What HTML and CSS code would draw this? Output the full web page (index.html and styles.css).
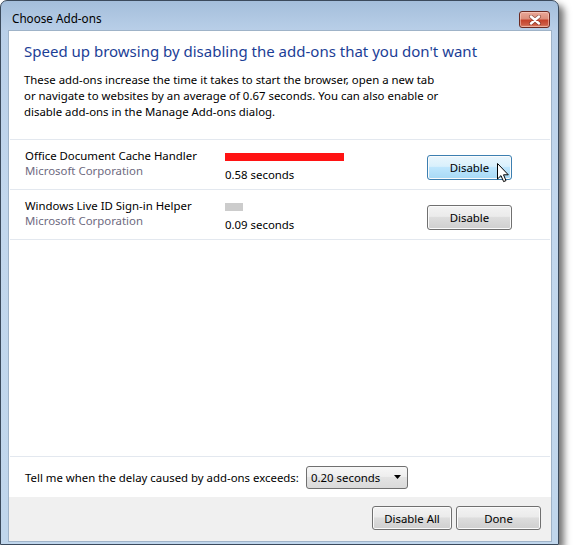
FILE: index.html
```html
<!DOCTYPE html>
<html>
<head>
<meta charset="utf-8">
<link rel="stylesheet" href="styles.css">
</head>
<body>
<div class="window">
  <div class="titlebar">
    <span class="title">Choose Add-ons</span>
    <div class="close">
      <svg width="14" height="10" viewBox="0 0 14 10">
        <path d="M3 1.5 L11 8.5 M11 1.5 L3 8.5" stroke="#5a1f16" stroke-width="4" stroke-linecap="round" fill="none" opacity="0.55"/>
        <path d="M3 1.5 L11 8.5 M11 1.5 L3 8.5" stroke="#ffffff" stroke-width="2.4" stroke-linecap="round" fill="none"/>
      </svg>
    </div>
  </div>
  <div class="client">
    <div class="main">
      <h1 class="heading">Speed up browsing by disabling the add-ons that you don't want</h1>
      <p class="desc">These add-ons increase the time it takes to start the browser, open a new tab<br>or navigate to websites by an average of 0.67 seconds. You can also enable or<br>disable add-ons in the Manage Add-ons dialog.</p>
      <div class="list">
        <div class="row">
          <div class="info">
            <div class="name">Office Document Cache Handler</div>
            <div class="company">Microsoft Corporation</div>
          </div>
          <div class="timing">
            <div class="bar bar-red" style="width:119px"></div>
            <div class="secs">0.58 seconds</div>
          </div>
          <div class="btn-wrap">
            <div class="btn btn-hover btn-row">Disable</div>
            <svg class="cursor" width="13" height="20" viewBox="0 0 13 20">
              <path d="M0.5 0.5 L0.5 16 L4 12.6 L6.6 18.6 L9 17.6 L6.5 11.8 L11.3 11.8 Z" fill="#ffffff" stroke="#000000" stroke-width="1" stroke-linejoin="miter"/>
            </svg>
          </div>
        </div>
        <div class="row row-last">
          <div class="info">
            <div class="name">Windows Live ID Sign-in Helper</div>
            <div class="company">Microsoft Corporation</div>
          </div>
          <div class="timing">
            <div class="bar bar-gray" style="width:18px"></div>
            <div class="secs">0.09 seconds</div>
          </div>
          <div class="btn-wrap">
            <div class="btn btn-row">Disable</div>
          </div>
        </div>
      </div>
    </div>
    <div class="threshold">
      <span class="threshold-label">Tell me when the delay caused by add-ons exceeds:</span>
      <div class="combo">
        <span>0.20 seconds</span>
        <svg width="7" height="4" viewBox="0 0 7 4"><path d="M0 0 H7 L3.5 4 Z" fill="#000"/></svg>
      </div>
    </div>
    <div class="footer">
      <div class="btn btn-all">Disable All</div>
      <div class="btn btn-done">Done</div>
    </div>
  </div>
</div>
</body>
</html>
```
FILE: styles.css
```css
* { box-sizing: border-box; }
html, body { margin: 0; padding: 0; background: #ffffff; }
body {
  font-family: "Noto Sans", "Open Sans", sans-serif;
  font-size: 11.4px;
  color: #000;
}
.window {
  width: 559px;
  height: 545px;
  border: 1px solid #3b4a5c;
  border-radius: 7px 7px 0 0;
  background: linear-gradient(#a4bedb 0px, #b9cfe8 30px, #c2d7ed 200px, #c0d6ec 100%);
  box-shadow: 5px 5px 7px rgba(0, 0, 0, 0.55);
  display: flex;
  flex-direction: column;
}
.titlebar {
  height: 29px;
  flex: none;
  display: flex;
  justify-content: space-between;
  align-items: flex-start;
  padding: 9px 8px 0 11px;
}
.title {
  font-size: 11.7px;
  line-height: 16px;
  color: #000;
}
.close {
  width: 31px;
  height: 17px;
  border: 1px solid #6b2a22;
  border-radius: 3px;
  background: linear-gradient(#e9a898 0%, #dc8f7c 45%, #c5422b 55%, #cd5c45 85%, #de8b72 100%);
  box-shadow: inset 0 0 0 1px rgba(255, 220, 210, 0.5);
  display: flex;
  align-items: center;
  justify-content: center;
  margin-top: 1px;
}
.client {
  flex: 1;
  margin: 0 6px 2px 7px;
  background: #ffffff;
  display: flex;
  flex-direction: column;
  border: 1px solid #9fb3c8;
}
.main {
  flex: 1;
  padding-top: 10px;
}
.heading {
  margin: 0;
  padding: 0 0 0 15px;
  font-size: 15px;
  font-weight: normal;
  line-height: 21px;
  color: #1c3e96;
}
.desc {
  margin: 10px 0 19px 0;
  padding-left: 15px;
  line-height: 16px;
}
.list {
  margin: 0 1px;
}
.row {
  height: 50px;
  border-top: 1px solid #e3e8ef;
  display: grid;
  grid-template-columns: 200px 202px 85px;
  align-items: start;
  padding: 8px 0 0 15px;
}
.row-last {
  height: 51px;
  border-bottom: 1px solid #e3e8ef;
}
.name { line-height: 15px; }
.company { line-height: 15px; color: #6e6a80; }
.timing { padding-top: 5px; }
.bar { height: 8px; }
.bar-red { background: #ff1313; }
.bar-gray { background: #cccccc; }
.secs { margin-top: 6px; line-height: 15px; }
.btn-wrap {
  position: relative;
  margin-top: 7px;
}
.btn {
  height: 25px;
  border: 1px solid #707070;
  border-radius: 3px;
  background: linear-gradient(#f3f3f3 0%, #ebebeb 45%, #dddddd 50%, #cfcfcf 100%);
  box-shadow: inset 0 0 0 1px #fbfbfb;
  display: flex;
  align-items: center;
  justify-content: center;
  line-height: 15px;
}
.btn-row { width: 85px; }
.btn-hover {
  border-color: #3c7fb1;
  background: linear-gradient(#eaf6fd 0%, #d9f0fc 45%, #bee6fd 50%, #a7d9f5 100%);
}
.cursor {
  position: absolute;
  left: 70px;
  top: 8px;
}
.threshold {
  height: 41px;
  margin: 0 1px;
  border-top: 1px solid #e3e8ef;
  display: flex;
  align-items: center;
  padding: 0 0 0 15px;
}
.threshold-label {
  width: 281px;
  flex: none;
  white-space: nowrap;
}
.combo {
  width: 102px;
  height: 23px;
  border: 1px solid #707070;
  border-radius: 3px;
  background: linear-gradient(#f7f7f7 0%, #eeeeee 45%, #e3e3e3 50%, #dadada 100%);
  display: flex;
  align-items: center;
  justify-content: space-between;
  padding: 0 6px 0 4px;
}
.footer {
  height: 44px;
  flex: none;
  background: #f0f0f0;
  display: flex;
  justify-content: flex-end;
  align-items: flex-start;
  gap: 4px;
  padding: 9px 10px 0 0;
}
.btn-all { width: 80px; height: 24px; }
.btn-done { width: 85px; height: 24px; }
```
